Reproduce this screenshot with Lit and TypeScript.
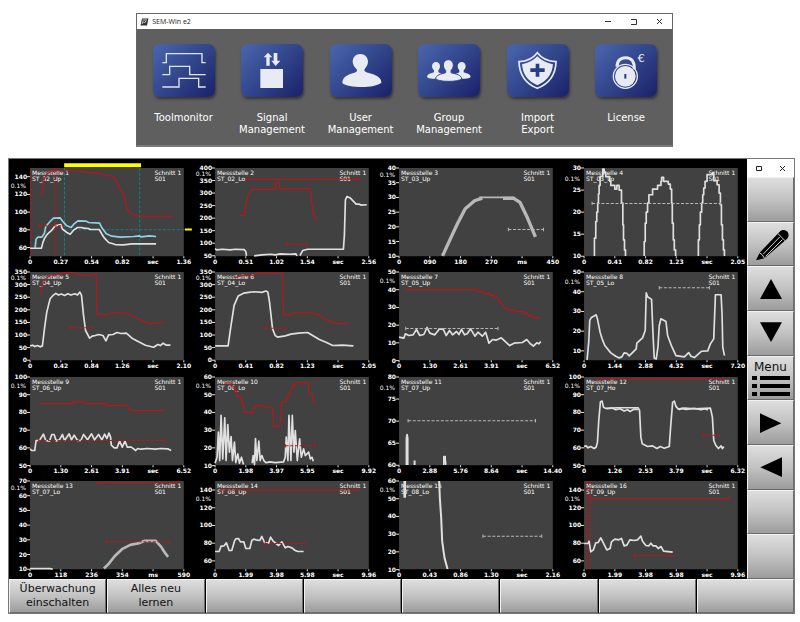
import { LitElement, html, svg, css, nothing } from "lit";
import { customElement, property } from "lit/decorators.js";

type Tone = "white" | "cyan" | "red" | "teal" | "grey" | "yellow";

interface Trace {
  tone: Tone;
  d: string;
  weight?: number;
  dashed?: boolean;
}

/** Horizontal limit with end caps. */
interface Limit {
  tone: Tone;
  from: number;
  to: number;
  y: number;
  dashed?: boolean;
}

interface Station {
  id: number;
  tool: string;
  /** First y value, step between values, number of values. */
  y: [number, number, number];
  /** Grid offset of the first y value and distance between values. */
  ySpan: [number, number];
  x: string[];
  traces: Trace[];
  limits?: Limit[];
  verticals?: { tone: Tone; x: number }[];
}

// Traces are plotted on a 460 x 264 grid, three units to the pixel.
const GRID_W = 460;
const GRID_H = 264;
const UNIT = 3;

const stations: Station[] = [
  {
    id: 1, tool: "ST_32_Up", y: [140, -20, 5], ySpan: [26, 53],
    x: ["0", "0.27", "0.54", "0.82", "sec", "1.36"],
    traces: [
      { tone: "teal", weight: 3, dashed: true, d: "M103 185H460" },
      { tone: "red", d: "M35 83L38 55 42 35 50 18 70 6 110 9 160 10 170 14 200 14 210 18 240 23 252 27 260 45 282 85 290 120 302 138 315 142 350 144 425 144" },
      { tone: "white", d: "M0 240L34 240 38 224 43 211 50 200 57 193 65 186 75 173 92 169 97 183 110 193 120 198 130 186 142 178 155 178 160 180 175 181 180 184 207 184 215 198 222 209 235 223 255 229 280 230 305 227 377 227" },
      { tone: "cyan", d: "M15 240L18 213 23 207 35 207 43 195 47 175 60 160 70 150 90 149 98 160 110 173 123 178 132 167 143 158 168 159 175 163 208 165 215 179 228 197 245 204 270 207 310 205 328 203 332 206 357 203 377 205" },
      { tone: "yellow", weight: 12, d: "M102 -8H332" },
      { tone: "yellow", weight: 6, d: "M463 184H484" },
    ],
    limits: [{ tone: "red", from: 28, to: 100, y: 173, dashed: true }],
    verticals: [{ tone: "red", x: 1 }, { tone: "red", x: 73 }, { tone: "teal", x: 103 }, { tone: "teal", x: 328 }],
  },
  {
    id: 2, tool: "ST_02_Lo", y: [400, -50, 8], ySpan: [0, 37.5],
    x: ["0", "0.51", "1.02", "1.54", "sec", "2.56"],
    traces: [
      { tone: "red", d: "M75 142L87 142 90 126 93 106 99 80 112 64 179 64 181 45 192 45 194 63 215 62 282 61 286 70 290 110 295 140 304 157" },
      { tone: "white", d: "M0 241L5 245 22 243 45 245 60 243 87 244 92 250 94 263M117 263L140 260 167 258 180 260 195 257 225 258 242 257 245 263M254 262L262 247 277 243 384 243 387 200 390 95 395 85 405 90 422 108 430 108 438 111 454 110" },
    ],
    limits: [
      { tone: "red", from: 95, to: 432, y: 34 },
      { tone: "red", from: 214, to: 274, y: 228, dashed: true },
    ],
  },
  {
    id: 3, tool: "ST_03_Up", y: [40, -5, 7], ySpan: [0, 44],
    x: ["0", "090", "180", "270", "ms", "450"],
    traces: [
      { tone: "grey", weight: 10, d: "M130 263L159 200 175 166 198 122 226 98 249 90M311 91L343 91 362 103 384 149 408 206" },
      { tone: "grey", weight: 5, d: "M240 88H345" },
    ],
    limits: [{ tone: "grey", from: 327, to: 432, y: 184, dashed: true }],
  },
  {
    id: 4, tool: "ST_03_Lo", y: [30, -5, 5], ySpan: [0, 66],
    x: ["0", "0.41", "0.82", "1.23", "sec", "2.05"],
    traces: [
      { tone: "white", d: "M31 263V210H35V160H38V132H41V105H43V78H45V52H48V25H56V3H60V14H65V26H77V40H80V52H92V63H98V52H105V66H112V105H116V170H118V215H121V245H124V263" },
      { tone: "white", d: "M180 263V220H183V165H186V132H190V105H194V80H205V63H220V52H230V40H232V28H238V40H252V48H258V63H262V105H264V165H267V215H270V245H274V263" },
      { tone: "white", d: "M342 263V215H345V170H348V132H352V105H355V80H358V60H362V40H368V20H384V14H388V38H398V50H404V75H408V110H411V170H414V215H417V245H420V263" },
    ],
    limits: [{ tone: "grey", from: 24, to: 408, y: 106, dashed: true }],
  },
  {
    id: 5, tool: "ST_04_Up", y: [350, -50, 8], ySpan: [0, 37.7],
    x: ["0", "0.42", "0.84", "1.26", "sec", "2.10"],
    traces: [
      { tone: "red", d: "M31 68L36 40 45 22 60 10 90 6 110 1 132 2 150 8 170 11 198 6 200 128 228 128 245 123 290 123 310 132 330 143 357 154 398 152" },
      { tone: "white", d: "M0 221L8 219 14 223 22 220 30 224 37 221 43 170 50 120 60 80 70 69 77 64 85 69 94 66 103 70 113 65 122 69 134 65 142 69 149 60 154 70 160 130 166 175 178 198 186 192 195 190 205 187 218 190 227 206 235 188 248 187 260 181 272 184 288 183 305 198 325 209 345 219 370 225 382 217 390 220 398 213 408 219 420 219" },
    ],
    limits: [{ tone: "red", from: 121, to: 185, y: 167, dashed: true }],
  },
  {
    id: 6, tool: "ST_04_Lo", y: [350, -50, 8], ySpan: [0, 37.7],
    x: ["0", "0.41", "0.82", "1.23", "sec", "2.05"],
    traces: [
      { tone: "red", d: "M57 17L87 10 117 10 127 3 202 4 205 128 222 128 237 122 287 122 312 128 332 143 362 154 400 153" },
      { tone: "white", d: "M0 221L39 221 47 165 57 100 69 72 87 63 100 61 118 59 140 61 152 57 158 60 163 90 172 170 180 190 187 195 210 191 227 186 250 183 277 181 292 190 312 202 332 210 352 220 380 219 414 221" },
    ],
    limits: [{ tone: "red", from: 150, to: 212, y: 168, dashed: true }],
  },
  {
    id: 7, tool: "ST_05_Up", y: [50, -10, 6], ySpan: [0, 53],
    x: ["0", "1.30", "2.61", "3.91", "sec", "6.52"],
    traces: [
      { tone: "red", d: "M16 53H235V58H250V64H272V70H285V76H296L302 92 310 96 318 110H330V114H345V118H374V124H386V130H400V137H424" },
      { tone: "white", d: "M0 195L14 198 19 185 29 190 42 188 52 172 62 190 74 187 84 166 92 183 107 188 120 171 132 171 141 190 151 175 160 188 172 178 179 187 187 172 196 188 204 185 214 170 227 192 236 180 249 192 259 180 269 213 280 202 290 204 306 197 318 208 331 220 344 213 369 211 382 202 392 214 402 222 412 212 418 215 424 208" },
    ],
    limits: [{ tone: "grey", from: 20, to: 296, y: 169, dashed: true }],
  },
  {
    id: 8, tool: "ST_05_Lo", y: [50, -10, 5], ySpan: [0, 59],
    x: ["0", "1.44", "2.88", "4.32", "sec", "7.20"],
    traces: [
      { tone: "white", d: "M9 263L14 210 17 145 22 136 30 132 36 128 40 140 48 180 54 200 62 220 80 242 95 252 105 257 113 254 120 242 128 243 135 251 148 238 156 230 158 213 175 197 183 175 186 62 190 74 202 82 206 180 210 258 216 260 221 225 225 160 230 140 245 148 250 190 262 222 275 250 300 254 313 241 320 252 330 256 345 243 352 237 370 236 378 215 388 200 393 68 410 68 413 130 415 225 420 250" },
    ],
    limits: [{ tone: "grey", from: 225, to: 375, y: 47, dashed: true }],
  },
  {
    id: 9, tool: "ST_06_Up", y: [100, -10, 6], ySpan: [0, 53],
    x: ["0", "1.30", "2.61", "3.91", "sec", "6.52"],
    traces: [
      { tone: "red", d: "M28 80H130V74H165V80H227V85H292L298 100H400" },
      { tone: "white", d: "M0 215L5 220 14 220 18 190 28 190 40 171 47 190 58 192 65 172 72 172 78 191 88 188 97 172 103 190 110 180 117 170 124 188 132 174 142 190 152 190 160 172 172 188 184 170 193 188 205 172 215 188 223 171 230 184 236 168 241 180 243 204 252 212 260 212 268 192 276 210 284 192 291 210 303 210 316 220 322 214 332 216 350 214 375 216 390 214 412 215 422 220" },
    ],
    limits: [{ tone: "red", from: 26, to: 402, y: 190, dashed: true }],
  },
  {
    id: 10, tool: "ST_06_Lo", y: [60, -10, 6], ySpan: [0, 53],
    x: ["0", "1.98", "3.97", "5.95", "sec", "9.92"],
    traces: [
      { tone: "red", d: "M28 18H50V30H58V42H65V58H78V62H80V76H84L88 106H113V93H122V86H150V92H172L176 148H194L200 74H212V66H218V50H226L232 25H240V17H280V50H290L297 80" },
      { tone: "white", d: "M0 258L6 240 10 165 14 250 18 115 23 245 29 122 33 250 38 142 43 225 48 178 52 250 58 195 62 256 68 230 73 258 79 240 85 262M111 258L114 235 118 262 121 184 125 250 131 192 135 250 140 235 146 250 152 256 165 254 180 256 205 254 210 240 213 180 218 250 221 115 227 250 231 115 236 225 240 160 246 250 253 185 258 240 265 215 270 235 280 225 285 245 290 240 294 252" },
    ],
    limits: [{ tone: "red", from: 211, to: 297, y: 206, dashed: true }],
  },
  {
    id: 11, tool: "ST_07_Up", y: [80, -5, 5], ySpan: [0, 66],
    x: ["0", "2.88", "5.76", "8.64", "sec", "14.40"],
    traces: [{ tone: "white", d: "M22 263V184L24 172 26 184V263M46 250V263M47 250V263M134 263V238H138V246L140 263" }],
    limits: [{ tone: "grey", from: 27, to: 408, y: 131, dashed: true }],
  },
  {
    id: 12, tool: "ST_07_Ho", y: [100, -10, 6], ySpan: [0, 53],
    x: ["0", "1.26", "2.53", "3.79", "sec", "6.32"],
    traces: [
      { tone: "white", d: "M0 208L6 206 12 212 20 208 30 214 36 210 40 195 44 130 49 74 54 72 58 90 64 94 100 92 162 92 166 100 170 180 174 200 190 208 205 206 218 214 228 208 240 213 255 208 259 150 265 76 270 72 275 88 282 96 300 93 330 95 378 93 384 120 388 190 394 204 402 214 410 206 414 214 418 208" },
      { tone: "white", d: "M68 95L84 93 95 98 108 95 120 102 130 98 138 103 150 96 162 97M284 98L292 94 305 97 330 94 350 98 362 95 370 99" },
    ],
    limits: [
      { tone: "red", from: 38, to: 418, y: 6 },
      { tone: "red", from: 356, to: 406, y: 174, dashed: true },
    ],
  },
  {
    id: 13, tool: "ST_07_Lo", y: [70, -10, 7], ySpan: [0, 44],
    x: ["0", "118", "236", "354", "ms", "590"],
    traces: [
      { tone: "white", d: "M0 262H60L68 264" },
      { tone: "grey", weight: 8, d: "M221 262L235 248 253 225 275 204 300 191 326 186 343 179 376 179 393 198 403 214 413 227" },
    ],
    limits: [
      { tone: "red", from: 202, to: 440, y: 5 },
      { tone: "red", from: 227, to: 415, y: 182, dashed: true },
    ],
  },
  {
    id: 14, tool: "ST_08_Up", y: [140, -20, 5], ySpan: [27, 53],
    x: ["0", "1.99", "3.98", "5.98", "sec", "9.96"],
    traces: [
      { tone: "white", d: "M0 211L12 211 18 195 27 194 34 185 42 208 50 208 58 180 62 173 70 172 76 182 86 182 92 202 104 202 110 178 116 174 122 176 134 178 140 166 148 184 160 186 166 168 174 180 190 193 200 182 210 200 218 196 230 200 240 208 248 211 265 211" },
    ],
    limits: [
      { tone: "red", from: 18, to: 427, y: 27 },
      { tone: "red", from: 150, to: 267, y: 187, dashed: true },
    ],
  },
  {
    id: 15, tool: "ST_08_Lo", y: [60, -10, 6], ySpan: [0, 53],
    x: ["0", "0.43", "0.86", "1.30", "sec", "2.16"],
    traces: [
      { tone: "white", weight: 8, d: "M17 0V50" },
      { tone: "white", weight: 6, d: "M120 0L122 50 126 110 129 180 136 230 145 263" },
    ],
    limits: [{ tone: "grey", from: 251, to: 427, y: 165, dashed: true }],
  },
  {
    id: 16, tool: "ST_09_Up", y: [140, -20, 5], ySpan: [27, 53],
    x: ["0", "1.99", "3.98", "5.98", "sec", "9.96"],
    traces: [
      { tone: "white", d: "M0 187L12 187 15 180 20 212 28 206 35 185 42 184 50 170 58 186 68 206 78 202 82 182 92 174 104 176 112 172 120 194 128 192 137 176 150 178 160 176 170 165 175 180 185 193 194 194 200 186 206 194 215 194 222 202 230 196 238 210 265 213" },
    ],
    limits: [
      { tone: "red", from: 20, to: 435, y: 53 },
      { tone: "red", from: 150, to: 263, y: 223, dashed: true },
    ],
    verticals: [{ tone: "red", x: 8 }, { tone: "red", x: 18 }],
  },
];

@customElement("signal-chart")
export class SignalChart extends LitElement {
  @property({ attribute: false }) station!: Station;

  static styles = css`
    :host { display: block; min-width: 0; }
    .chart { display: block; width: 100%; height: auto; overflow: visible; }
    .plot { fill: #414141; }
    .tick { stroke: #e8e8e8; stroke-width: 1; }
    .text { font: 6px "DejaVu Sans", sans-serif; fill: #fff; }
    .strong { font-weight: 700; }
    .end { text-anchor: end; }
    .middle { text-anchor: middle; }
    .line { fill: none; stroke-linejoin: round; }
    .dash { stroke-dasharray: 9 5; }
    .dots { stroke-dasharray: 9 4 3 4; }
    .white { stroke: #e0e0e0; }
    .cyan { stroke: #8fd3e6; }
    .red { stroke: #cc1010; }
    .teal { stroke: #128080; }
    .grey { stroke: #b8b8b8; }
    .yellow { stroke: #ffff00; }
  `;

  private limit(l: Limit) {
    const cap = 5;
    return svg`
      <path class="line ${l.tone} ${l.dashed ? "dash" : ""}" stroke-width="3" d="M${l.from} ${l.y}H${l.to}"></path>
      <path class="line ${l.tone}" stroke-width="3" d="M${l.from} ${l.y - cap}V${l.y + cap}M${l.to} ${l.y - cap}V${l.y + cap}"></path>`;
  }

  render() {
    const s = this.station;
    const [first, step, count] = s.y;
    const [top, gap] = s.ySpan;
    const w = GRID_W / UNIT;
    const h = GRID_H / UNIT;
    const rows = Array.from({ length: count }, (_, i) => ({ label: first + step * i, y: (top + gap * i) / UNIT }));
    return html`
      <svg class="chart" viewBox="-21 0 184 98" role="img" aria-label="Messstelle ${s.id}">
        <rect class="plot" width=${w} height=${h}></rect>
        ${rows.map((r) => svg`
          <path class="tick" d="M-3 ${r.y}H0"></path>
          <text class="text strong end" x="-3" y=${r.y + 2}>${r.label}</text>`)}
        <text class="text end" x="-4" y=${(top + gap / 2) / UNIT + 2}>0.1%</text>
        ${s.x.map((label, i) => {
          const x = (i * w) / (s.x.length - 1);
          return svg`
            <path class="tick" d="M${x} ${h}V${h + 2}"></path>
            <text class="text strong middle" x=${x} y=${h + 8}>${label}</text>`;
        })}
        <text class="text" x="2" y="7">Messstelle ${s.id}</text>
        <text class="text" x="2" y="13">${s.tool}</text>
        <text class="text" x="124" y="7">Schnitt 1</text>
        <text class="text" x="124" y="13">S01</text>
        <g transform="scale(${1 / UNIT})">
          ${(s.verticals ?? []).map((v) => svg`
            <path class="line ${v.tone} ${v.tone === "red" ? "dots" : "dash"}" stroke-width="3" d="M${v.x} 0V${GRID_H}"></path>`)}
          ${s.traces.map((t) => svg`
            <path class="line ${t.tone} ${t.dashed ? "dash" : ""}" stroke-width=${t.weight ?? (t.tone === "red" ? 3 : 5)} d=${t.d}></path>`)}
          ${(s.limits ?? []).map((l) => this.limit(l))}
        </g>
      </svg>`;
  }
}

const tileArt = {
  tool: svg`<path class="wire" d="M28 56H40V29H147V56H158M28 92H50V67H110V92H158M28 129H78V103H137V129H158"></path>`,
  signal: svg`
    <path class="solid" d="M58 75H126V132H58Z"></path>
    <path class="solid" d="M81 26L94 40H86V65H76V40H68ZM98 27H109V50H118L104 66 91 50H98Z"></path>`,
  user: svg`<path class="solid" d="M91 30C105 30 114 40 114 53C114 64 107 70 103 77C103 83 108 84 117 87C138 93 154 99 154 116C145 124 120 129 95 129C70 129 45 125 37 117C37 100 52 93 70 87C79 84 81 83 81 77C75 70 68 63 68 53C68 40 77 30 91 30Z"></path>`,
  group: svg`
    <path class="solid" d="M54 54C61 54 66 59 66 67C66 73 63 77 61 79V85L72 90V104H44C36 104 30 102 27 99C28 91 36 89 48 85V79C45 76 42 72 42 67C42 59 47 54 54 54Z"></path>
    <path class="solid" d="M131 54C124 54 119 59 119 67C119 73 122 77 124 79V85L112 90V104H141C149 104 155 102 158 99C157 91 149 89 137 85V79C140 76 143 72 143 67C143 59 138 54 131 54Z"></path>
    <path class="solid cut" d="M91 47C100 47 106 54 106 63C106 71 102 76 99 79V86C114 90 131 93 131 105C124 110 108 112 92 112C76 112 60 110 53 105C53 93 69 90 83 86V79C80 76 76 71 76 63C76 54 82 47 91 47Z"></path>`,
  shield: svg`
    <path class="ring" d="M91 26C79 42 58 52 36 53C37 96 57 119 91 133C125 119 146 96 147 53C125 52 103 42 91 26Z"></path>
    <path class="solid" d="M91 37C79 49 65 57 45 61C48 93 63 111 91 124C119 111 135 93 138 61C118 57 103 49 91 37Z"></path>
    <path class="hole" d="M86 59H97V73H113V84H97V98H86V84H70V73H86Z"></path>`,
  lock: svg`
    <path class="shackle" d="M66 68C66 48 79 41 92 41C110 41 119 53 118 76"></path>
    <circle class="ring thin" cx="91" cy="97" r="36"></circle>
    <circle class="solid" cx="91" cy="97" r="31"></circle>
    <path class="hole" d="M88 90H94V104H88Z"></path>
    <text class="euro" x="138" y="55">€</text>`,
};

@customElement("launcher-window")
export class LauncherWindow extends LitElement {
  static styles = css`
    :host { display: block; border: 1px solid #666; border-bottom: 2px solid #7a7a7a; background: #5f5f5f; }
    .bar { display: flex; align-items: center; height: 15px; background: #fff; padding-left: 3px; }
    .mark { width: 9px; height: 8px; margin-right: 3px; }
    .title { flex: 1; font: 7px/15px "Open Sans", "Noto Sans", sans-serif; color: #222; margin: 0; }
    .control { width: 26px; height: 15px; padding: 0; border: 0; background: none; display: grid; place-items: center; }
    .glyph { width: 7px; height: 7px; fill: none; stroke: #333; stroke-width: 1; }
    .apps { display: grid; grid-template-columns: repeat(6, 1fr); padding: 15px 2px 9px; }
    .app { display: flex; flex-direction: column; align-items: center; gap: 15px; padding: 0; border: 0; background: none; color: #fff; font: 10px/12px "DejaVu Sans", sans-serif; min-width: 0; }
    .tile { width: 62px; height: 53px; border-radius: 7px; background: linear-gradient(135deg, #4b66ae, #34498f 45%, #1a2168); box-shadow: 1px 2px 3px rgba(0, 0, 0, 0.45); }
    .art { display: block; width: 62px; height: 53px; }
    .label { min-height: 24px; white-space: pre-line; text-align: center; }
    .solid { fill: #e8ebf3; }
    .cut { stroke: #34478f; stroke-width: 3; }
    .wire { fill: none; stroke: #dfe4f2; stroke-width: 4; }
    .ring { fill: none; stroke: #e8ebf3; stroke-width: 5; }
    .thin { stroke-width: 4; }
    .shackle { fill: none; stroke: #e8ebf3; stroke-width: 9; }
    .hole { fill: #2b3c86; }
    .euro { font: 34px "DejaVu Sans", sans-serif; fill: #e8ebf3; text-anchor: middle; }
  `;

  private apps = [
    { label: "Toolmonitor", art: tileArt.tool },
    { label: "Signal\nManagement", art: tileArt.signal },
    { label: "User\nManagement", art: tileArt.user },
    { label: "Group\nManagement", art: tileArt.group },
    { label: "Import\nExport", art: tileArt.shield },
    { label: "License", art: tileArt.lock },
  ];

  render() {
    return html`
      <header class="bar">
        <svg class="mark" viewBox="0 0 18 16" aria-hidden="true">
          <path d="M4 1H17L14 15H1Z" fill="#333"></path>
          <path d="M5 4H14M4 12L6 7 9 10 12 6" fill="none" stroke="#fff" stroke-width="1.5"></path>
        </svg>
        <h1 class="title">SEM-Win e2</h1>
        <button class="control" aria-label="Minimize"><svg class="glyph" viewBox="0 0 7 7"><path d="M1 3.5H7"></path></svg></button>
        <button class="control" aria-label="Maximize"><svg class="glyph" viewBox="0 0 7 7"><path d="M1 1.5H6.5V6.5H1"></path></svg></button>
        <button class="control" aria-label="Close"><svg class="glyph" viewBox="0 0 7 7"><path d="M1 1L6 6M6 1L1 6"></path></svg></button>
      </header>
      <nav class="apps">
        ${this.apps.map((a) => html`
          <button class="app">
            <span class="tile"><svg class="art" viewBox="0 0 186 159" aria-hidden="true">${a.art}</svg></span>
            <span class="label">${a.label}</span>
          </button>`)}
      </nav>`;
  }
}

const keyArt = {
  pencil: svg`
    <path d="M27 115L38 92 98 29C104 22 116 22 122 30C127 38 125 46 119 52L52 109Z" fill="#000"></path>
    <path d="M49 96L98 45M56 103L106 53M92 34L114 56M37 92Q47 96 52 109" fill="none" stroke="#d0d0d0" stroke-width="3"></path>`,
  up: svg`<path d="M72 36L105 96H39Z"></path>`,
  down: svg`<path d="M39 34H105L72 93Z"></path>`,
  right: svg`<path d="M39 37L103 67 39 96Z"></path>`,
  left: svg`<path d="M105 37L40 67 105 96Z"></path>`,
};

@customElement("monitor-window")
export class MonitorWindow extends LitElement {
  static styles = css`
    :host { display: block; border: 1px solid #777; background: #000; }
    .main { display: grid; grid-template-columns: 1fr 47px; }
    .charts { display: grid; grid-template-columns: repeat(4, 1fr); row-gap: 6px; padding: 9px 0 0; align-content: start; }
    .side { display: grid; grid-template-rows: 18px repeat(9, 1fr); }
    .bar { display: flex; background: #fff; }
    .control { flex: 1; padding: 0; border: 0; background: none; display: grid; place-items: center; }
    .glyph { width: 7px; height: 7px; fill: none; stroke: #222; stroke-width: 1; }
    .key { display: flex; flex-direction: column; align-items: center; justify-content: center; min-width: 0; min-height: 0; padding: 0; border: 1px solid #6c6c6c; border-top-color: #f2f2f2; border-left-color: #f2f2f2; background: linear-gradient(#dedede, #c2c2c2 50%, #9c9c9c); color: #111; font: 11px/14px "DejaVu Sans", sans-serif; white-space: pre-line; }
    .art { display: block; width: 48px; height: 42px; flex: none; }
    .menu { font-size: 12px; }
    .list { display: block; width: 38px; height: 22px; }
    .soft { display: grid; grid-template-columns: repeat(8, 1fr); column-gap: 1px; height: 34px; }
  `;

  private sideKeys: { label: string; art?: unknown }[] = [
    { label: "Leer" },
    { label: "Bearbeiten", art: keyArt.pencil },
    { label: "Auf", art: keyArt.up },
    { label: "Ab", art: keyArt.down },
    { label: "Menu" },
    { label: "Weiter", art: keyArt.right },
    { label: "Zurück", art: keyArt.left },
    { label: "Leer" },
    { label: "Leer" },
  ];

  private softKeys = ["Überwachung\neinschalten", "Alles neu\nlernen", "", "", "", "", "", ""];

  private sideKey(k: { label: string; art?: unknown }) {
    if (k.label === "Menu") {
      return html`
        <button class="key menu">Menu<svg class="list" viewBox="0 0 114 66" aria-hidden="true">
            <path d="M0 6H15V18H0ZM24 6H114V18H24ZM0 30H15V42H0ZM24 30H114V42H24ZM0 54H15V66H0ZM24 54H114V66H24Z"></path>
          </svg></button>`;
    }
    return html`
      <button class="key" aria-label=${k.label}>
        ${k.art ? html`<svg class="art" viewBox="0 3 144 126" aria-hidden="true">${k.art}</svg>` : nothing}
      </button>`;
  }

  render() {
    return html`
      <div class="main">
        <main class="charts">
          ${stations.map((s) => html`<signal-chart .station=${s}></signal-chart>`)}
        </main>
        <aside class="side">
          <div class="bar">
            <button class="control" aria-label="Maximize"><svg class="glyph" viewBox="0 0 7 7"><path d="M1.5 1.5H6.5V5.5H1.5Z"></path></svg></button>
            <button class="control" aria-label="Close"><svg class="glyph" viewBox="0 0 7 7"><path d="M1 1L6 6M6 1L1 6"></path></svg></button>
          </div>
          ${this.sideKeys.map((k) => this.sideKey(k))}
        </aside>
      </div>
      <footer class="soft">
        ${this.softKeys.map((label) => html`<button class="key">${label}</button>`)}
      </footer>`;
  }
}

@customElement("app-root")
export class AppRoot extends LitElement {
  static styles = css`
    :host { display: block; background: #fff; padding: 13px 5px 8px 8px; }
    .launcher { width: 68%; margin: 0 0 11px 16.3%; }
  `;

  render() {
    return html`
      <launcher-window class="launcher"></launcher-window>
      <monitor-window></monitor-window>`;
  }
}
